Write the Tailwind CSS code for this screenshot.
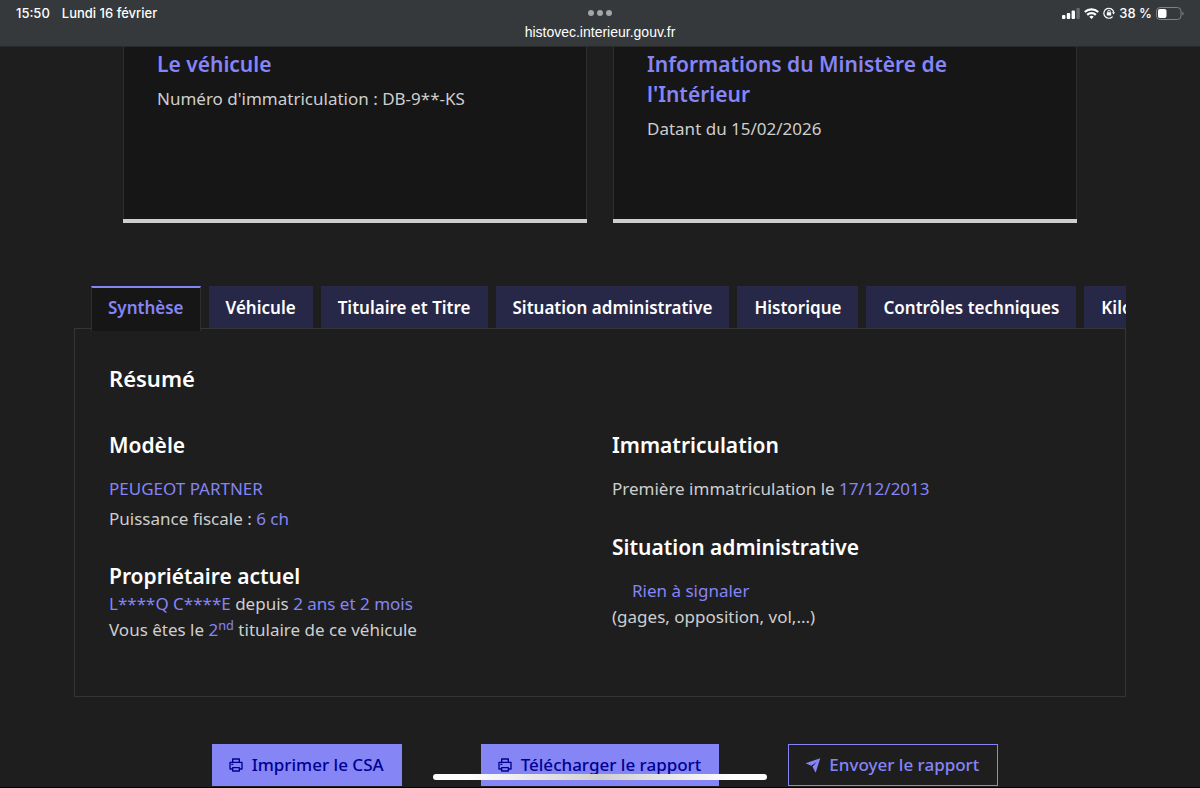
<!DOCTYPE html>
<html lang="fr">
<head>
  <meta charset="UTF-8" />
  <meta name="viewport" content="width=device-width, initial-scale=1.0" />
  <title>HistoVec</title>
  <script src="https://cdn.jsdelivr.net/npm/@tailwindcss/browser@4"></script>
</head>
<body class="bg-[#1e1e1e] font-['Noto_Sans',sans-serif] text-[17px] leading-[26px] text-[#cecece] h-screen overflow-hidden relative">

  <!-- Barre d'état -->
  <header class="h-[47px] bg-[#35393b] border-b border-[#2a2a2a] grid grid-cols-3 items-start px-4 font-[Inter,sans-serif] text-[13px] leading-[26px] font-medium text-white">
    <div class="flex gap-3">
      <span>15:50</span>
      <span>Lundi 16 février</span>
    </div>
    <div class="flex flex-col items-center">
      <button type="button" aria-label="Fenêtres" class="flex gap-[3px] pt-[10px]">
        <span class="size-[6px] rounded-full bg-[#a3a5a6]"></span>
        <span class="size-[6px] rounded-full bg-[#a3a5a6]"></span>
        <span class="size-[6px] rounded-full bg-[#a3a5a6]"></span>
      </button>
      <span class="pt-[3px] font-['Liberation_Sans',sans-serif] text-[14px] font-normal">histovec.interieur.gouv.fr</span>
    </div>
    <div class="flex items-center justify-end gap-1">
      <svg class="h-[11px] w-[18px]" viewBox="0 0 18 11" fill="#fff">
        <rect x="0" y="7" width="3.4" height="4" rx="1" />
        <rect x="4.8" y="5" width="3.4" height="6" rx="1" />
        <rect x="9.6" y="2.6" width="3.4" height="8.4" rx="1" />
        <rect x="14.4" y="0" width="3.4" height="11" rx="1" opacity=".25" />
      </svg>
      <svg class="h-[11px] w-[15px]" viewBox="0 0 15 11" fill="none" stroke="#fff" stroke-width="2.2">
        <path d="M.8 4a9.6 9.6 0 0 1 13.4 0" />
        <path d="M3.2 6.9a6.2 6.2 0 0 1 8.6 0" />
        <path d="M7.5 11 5.3 8.8a3.2 3.2 0 0 1 4.4 0z" fill="#fff" stroke="none" />
      </svg>
      <svg class="size-3" viewBox="0 0 12 12" fill="none" stroke="#fff" stroke-width="1.2">
        <path d="M9.6 9.6A5 5 0 1 1 10.8 5.4" />
        <path d="M9 5.3h3L10.6 7.6z" fill="#fff" stroke="none" />
        <rect x="3.8" y="5.3" width="4.4" height="3.2" rx=".5" fill="#fff" stroke="none" />
        <path d="M4.8 5.5V4.4a1.2 1.2 0 0 1 2.4 0v1.1" stroke-width=".9" />
      </svg>
      <span>38 %</span>
      <svg class="h-[13px] w-[28px]" viewBox="0 0 28 13" fill="none">
        <rect x=".5" y=".5" width="24.5" height="12" rx="3.6" stroke="#7f8283" />
        <path d="M26.4 4.4c1.6.6 1.6 3.6 0 4.2z" fill="#7f8283" />
        <rect x="2" y="2" width="8.5" height="9" rx="2" fill="#fff" />
      </svg>
    </div>
  </header>

  <main>
    <!-- Cartes -->
    <section class="grid grid-cols-2 gap-[26px] px-[123px]">
      <div class="border-b-4 border-[#cecece]">
        <div class="h-[172px] bg-[#161616] border-x border-[#2e2e2e] px-[33px] pt-[2px]">
          <h2 class="text-[21px] leading-[30px] font-semibold text-[#8585f6]">Le véhicule</h2>
          <p class="mt-[7px]">Numéro d'immatriculation : DB-9**-KS</p>
        </div>
      </div>
      <div class="border-b-4 border-[#cecece]">
        <div class="h-[172px] bg-[#161616] border-x border-[#2e2e2e] px-[33px] pt-[2px]">
          <h2 class="text-[21px] leading-[30px] font-semibold text-[#8585f6]">Informations du Ministère de l'Intérieur</h2>
          <p class="mt-[7px]">Datant du 15/02/2026</p>
        </div>
      </div>
    </section>

    <!-- Onglets -->
    <section class="mx-[74px] mt-[63px]">
      <div role="tablist" class="relative z-10 -mb-[3px] flex items-start gap-2 overflow-hidden pl-[17px] font-semibold whitespace-nowrap text-white">
        <button type="button" role="tab" aria-selected="true" class="h-[45px] shrink-0 bg-[#161616] border-x border-t-2 border-[#2e2e2e] border-t-[#8585f6] px-4 pb-1 text-[#8585f6]">Synthèse</button>
        <button type="button" role="tab" class="h-[42px] shrink-0 bg-[#272747] px-[17px] pt-[2px]">Véhicule</button>
        <button type="button" role="tab" class="h-[42px] shrink-0 bg-[#272747] px-[17px] pt-[2px]">Titulaire et Titre</button>
        <button type="button" role="tab" class="h-[42px] shrink-0 bg-[#272747] px-[17px] pt-[2px]">Situation administrative</button>
        <button type="button" role="tab" class="h-[42px] shrink-0 bg-[#272747] px-[17px] pt-[2px]">Historique</button>
        <button type="button" role="tab" class="h-[42px] shrink-0 bg-[#272747] px-[17px] pt-[2px]">Contrôles techniques</button>
        <button type="button" role="tab" class="h-[42px] shrink-0 bg-[#272747] px-[17px] pt-[2px]">Kilométrage</button>
      </div>

      <div role="tabpanel" class="border border-[#353535] px-[34px] pt-8 pb-[53px]">
        <h2 class="text-[22px] leading-[34px] font-semibold text-white">Résumé</h2>
        <div class="mt-[35px] grid grid-cols-2 gap-6">
          <div>
            <h3 class="text-[21px] leading-[30px] font-semibold text-white">Modèle</h3>
            <p class="mt-4 text-[#8585f6]">PEUGEOT PARTNER</p>
            <p class="mt-1">Puissance fiscale : <span class="text-[#8585f6]">6 ch</span></p>
            <h3 class="mt-[29px] text-[21px] leading-[30px] font-semibold text-white">Propriétaire actuel</h3>
            <p><span class="text-[#8585f6]">L****Q C****E</span> depuis <span class="text-[#8585f6]">2 ans et 2 mois</span></p>
            <p>Vous êtes le <span class="text-[#8585f6]">2<sup>nd</sup></span> titulaire de ce véhicule</p>
          </div>
          <div>
            <h3 class="text-[21px] leading-[30px] font-semibold text-white">Immatriculation</h3>
            <p class="mt-4">Première immatriculation le <span class="text-[#8585f6]">17/12/2013</span></p>
            <h3 class="mt-[30px] text-[21px] leading-[30px] font-semibold text-white">Situation administrative</h3>
            <p class="mt-4 pl-5 text-[#8585f6]">Rien à signaler</p>
            <p>(gages, opposition, vol,...)</p>
          </div>
        </div>
      </div>
    </section>

    <!-- Actions -->
    <section class="mt-[47px] grid grid-cols-3 justify-items-center px-40 font-medium whitespace-nowrap">
      <button type="button" class="flex h-[42px] items-center gap-2 bg-[#8585f6] pr-[18px] pl-4 text-[#000091]">
        <svg class="size-4" viewBox="0 0 24 24" fill="currentColor"><path d="M6 19H3a1 1 0 0 1-1-1V8a1 1 0 0 1 1-1h3V3a1 1 0 0 1 1-1h10a1 1 0 0 1 1 1v4h3a1 1 0 0 1 1 1v10a1 1 0 0 1-1 1h-3v2a1 1 0 0 1-1 1H7a1 1 0 0 1-1-1v-2zm0-2v-1a1 1 0 0 1 1-1h10a1 1 0 0 1 1 1v1h2V9H4v8h2zM8 4v3h8V4H8zm0 13v3h8v-3H8zm-3-7h3v2H5v-2z" /></svg>
        Imprimer le CSA
      </button>
      <button type="button" class="flex h-[42px] items-center gap-2 bg-[#8585f6] pr-[18px] pl-4 text-[#000091]">
        <svg class="size-4" viewBox="0 0 24 24" fill="currentColor"><path d="M6 19H3a1 1 0 0 1-1-1V8a1 1 0 0 1 1-1h3V3a1 1 0 0 1 1-1h10a1 1 0 0 1 1 1v4h3a1 1 0 0 1 1 1v10a1 1 0 0 1-1 1h-3v2a1 1 0 0 1-1 1H7a1 1 0 0 1-1-1v-2zm0-2v-1a1 1 0 0 1 1-1h10a1 1 0 0 1 1 1v1h2V9H4v8h2zM8 4v3h8V4H8zm0 13v3h8v-3H8zm-3-7h3v2H5v-2z" /></svg>
        Télécharger le rapport
      </button>
      <button type="button" class="flex h-[42px] items-center gap-2 border border-[#8585f6] pr-[18px] pl-4 text-[#8585f6]">
        <svg class="size-4" viewBox="0 0 24 24" fill="currentColor"><path d="M.8 9.2 22.8 2 16 23.6 11.2 14.6 17.6 7.4 9.4 13z" /></svg>
        Envoyer le rapport
      </button>
    </section>
  </main>

  <div class="absolute inset-x-0 bottom-0 h-px bg-black"></div>
  <div class="absolute bottom-2 left-1/2 h-[6px] w-[334px] -translate-x-1/2 rounded-full bg-linear-to-r from-white from-10% via-[#d0d0d0] via-50% to-white to-90%"></div>

</body>
</html>
